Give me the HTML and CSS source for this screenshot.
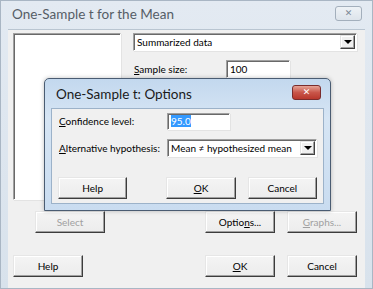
FILE: index.html
```html
<!DOCTYPE html>
<html lang="en">
  <head>
    <meta charset="UTF-8" />
    <title>One-Sample t for the Mean</title>
    <link rel="stylesheet" href="styles.css">
  </head>
  <body>
    <div class="window">
      <div class="titlebar">
        <span class="title">One-Sample t for the Mean</span>
        <span class="close-btn inactive">&#x2715;</span>
      </div>

      <div class="client">
        <div class="top">
          <div class="listbox"></div>
          <div class="right-col">
            <div class="combo wide">
              <span>Summarized data</span>
              <span class="arrow"></span>
            </div>
            <div class="field-row">
              <label><u>S</u>ample size:</label>
              <div class="textbox size">100</div>
            </div>
          </div>
        </div>

        <div class="btn-row row-one">
          <button class="btn disabled select">Select</button>
          <span class="spacer"></span>
          <button class="btn">Optio<u>n</u>s...</button>
          <button class="btn disabled"><u>G</u>raphs...</button>
        </div>

        <div class="btn-row row-two">
          <button class="btn">Help</button>
          <span class="spacer"></span>
          <button class="btn"><u>O</u>K</button>
          <button class="btn">Cancel</button>
        </div>
      </div>

      <!-- Options dialog on top -->
      <div class="dialog">
        <div class="dialog-title">
          <span>One-Sample t: Options</span>
          <span class="close-btn active">&#x2715;</span>
        </div>
        <div class="dialog-client">
          <div class="field-row first">
            <label><u>C</u>onfidence level:</label>
            <div class="textbox conf"><span class="selected">95.0</span></div>
          </div>
          <div class="field-row">
            <label><u>A</u>lternative hypothesis:</label>
            <div class="combo alt">
              <span>Mean &ne; hypothesized mean</span>
              <span class="arrow"></span>
            </div>
          </div>
          <div class="btn-row dialog-btns">
            <button class="btn">Help</button>
            <button class="btn ok"><u>O</u>K</button>
            <button class="btn">Cancel</button>
          </div>
        </div>
      </div>
    </div>
  </body>
</html>
```

FILE: styles.css
```css
* {
  box-sizing: border-box;
  margin: 0;
  padding: 0;
}

body {
  width: 373px;
  height: 289px;
  overflow: hidden;
  background-color: #ffffff;
  font-family: Lato, "Open Sans", Arial, sans-serif;
  font-size: 10px;
  color: #000000;
  white-space: nowrap;
}

u {
  text-decoration-thickness: 1px;
  text-underline-offset: 1px;
}

.window {
  position: relative;
  width: 373px;
  height: 289px;
  background: linear-gradient(#e3eaf2, #d8e2ec);
  border: 1px solid #a9b6c4;
  padding: 0 7px 1px 7px;
}

.titlebar {
  height: 28px;
  display: flex;
  align-items: center;
  justify-content: space-between;
  padding: 0 3px 0 4px;
}

.title {
  font-size: 13.5px;
  color: #555d66;
  margin-top: -2px;
}

.close-btn {
  display: flex;
  align-items: center;
  justify-content: center;
  font-family: "DejaVu Sans", sans-serif;
  font-size: 9px;
  font-weight: bold;
}

.close-btn.inactive {
  width: 27px;
  height: 15px;
  margin-top: -4px;
  border: 1px solid #a3afbc;
  border-radius: 3px;
  background: linear-gradient(#eef2f6, #dde4eb);
  color: #7c8896;
}

.client {
  height: 259px;
  background-color: #f0f0f0;
  border-top: 1px solid #b9c5d1;
  padding: 3px 8px 0 5px;
}

.top {
  display: flex;
  gap: 12px;
  height: 167px;
}

.listbox {
  width: 112px;
  height: 167px;
  background-color: #ffffff;
  border: 1px solid;
  border-color: #a0a0a0 #ffffff #ffffff #a0a0a0;
  box-shadow: inset 1px 1px 0 #696969, 1px 1px 0 #e3e3e3;
}

.right-col {
  display: flex;
  flex-direction: column;
  gap: 9px;
}

.combo {
  display: flex;
  align-items: center;
  justify-content: space-between;
  height: 18px;
  background-color: #ffffff;
  border: 1px solid;
  border-color: #a0a0a0 #ffffff #ffffff #a0a0a0;
  box-shadow: inset 1px 1px 0 #696969, 1px 1px 0 #e3e3e3;
  padding: 0 1px 0 3px;
}

.combo.wide {
  width: 224px;
}

.arrow {
  width: 15px;
  height: 14px;
  background-color: #f0f0f0;
  border: 1px solid;
  border-color: #e3e3e3 #404040 #404040 #e3e3e3;
  box-shadow: inset -1px -1px 0 #a0a0a0, inset 1px 1px 0 #ffffff;
  position: relative;
}

.arrow::after {
  content: "";
  position: absolute;
  left: 3px;
  top: 4px;
  border-left: 4px solid transparent;
  border-right: 4px solid transparent;
  border-top: 4px solid #000000;
}

.field-row {
  display: flex;
  align-items: center;
}

.field-row label {
  width: 93px;
  padding-left: 1px;
}

.textbox {
  height: 18px;
  background-color: #ffffff;
  border: 1px solid;
  border-color: #a0a0a0 #ffffff #ffffff #a0a0a0;
  box-shadow: inset 1px 1px 0 #696969, 1px 1px 0 #e3e3e3;
  padding: 0 3px;
  display: flex;
  align-items: center;
}

.textbox.size {
  width: 64px;
}

.btn-row {
  display: flex;
  gap: 12px;
}

.row-one {
  margin-top: 11px;
}

.row-one .select {
  margin-left: 22px;
}

.row-two {
  margin-top: 22px;
}

.spacer {
  flex: 1;
}

.btn {
  width: 70px;
  height: 22px;
  font-family: Lato, "Open Sans", Arial, sans-serif;
  font-size: 10px;
  color: #000000;
  background: linear-gradient(#f4f4f4, #ececec);
  border: 1px solid;
  border-color: #e6e6e6 #3c3c3c #3c3c3c #e6e6e6;
  box-shadow: inset -1px -1px 0 #a0a0a0, inset 1px 1px 0 #ffffff;
}

.btn.disabled {
  color: #a0a0a0;
}

/* options dialog */
.dialog {
  position: absolute;
  left: 43px;
  top: 77px;
  width: 287px;
  height: 133px;
  background: linear-gradient(#c3d8ee, #d6e5f4 30%, #c9dcf0);
  border: 1px solid #4a5c72;
  border-radius: 5px 5px 0 0;
  padding: 0 6px 7px 6px;
  box-shadow: 0 0 4px rgba(0, 0, 0, 0.25);
}

.dialog-title {
  height: 29px;
  display: flex;
  align-items: center;
  justify-content: space-between;
  padding: 0 3px 0 5px;
  font-size: 13.5px;
  color: #1a1a1a;
}

.close-btn.active {
  width: 29px;
  height: 15px;
  margin-top: -3px;
  border: 1px solid #7a2c2c;
  border-radius: 3px;
  background: linear-gradient(#e6a496, #c9564a 50%, #b8372c);
  color: #ffffff;
}

.dialog-client {
  height: 96px;
  background-color: #f0f0f0;
  border: 1px solid #9cb2c9;
  padding: 3px 6px 0 6px;
}

.dialog-client .field-row {
  height: 18px;
}

.dialog-client .field-row + .field-row {
  margin-top: 9px;
}

.dialog-client label {
  width: 109px;
}

.textbox.conf {
  width: 63px;
  height: 17px;
}

.selected {
  background-color: #3399ff;
  color: #ffffff;
}

.combo.alt {
  width: 150px;
}

.dialog-btns {
  margin-top: 20px;
}

.dialog-btns .ok {
  margin-left: 27px;
}
```
